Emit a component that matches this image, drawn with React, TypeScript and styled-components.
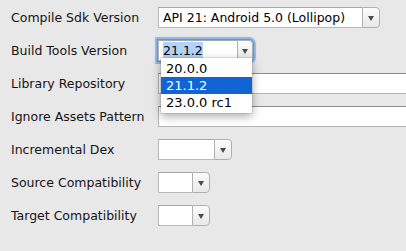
import styled, { createGlobalStyle } from 'styled-components'

const GlobalStyle = createGlobalStyle`
  html, body {
    margin: 0;
    background: #e8e8e8;
    overflow: hidden;
  }
  body {
    font-family: "DejaVu Sans", "Liberation Sans", sans-serif;
    color: #141414;
  }
`

const Form = styled.div`
  display: grid;
  grid-template-columns: 147px 1fr;
  grid-auto-rows: 21px;
  row-gap: 12px;
  align-items: center;
  padding: 7px 0 0 11px;
`

const Label = styled.span`
  font-size: 12.5px;
  line-height: 21px;
  white-space: nowrap;
`

const Combo = styled.div<{ $width: number; $focused?: boolean }>`
  position: relative;
  display: flex;
  width: ${(p) => p.$width}px;
  height: 21px;
  box-sizing: border-box;
  border-radius: 0 4px 4px 0;
  box-shadow: ${(p) =>
    p.$focused ? '0 0 0 1px #5f97db, 0 0 1px 3px #8ab5e8' : 'none'};
`

const ComboField = styled.div`
  flex: 1;
  min-width: 0;
  background: #fff;
  border: 1px solid #b8b8b8;
  border-top-color: #a6a6a6;
  border-right: none;
  box-sizing: border-box;
  padding-left: 4px;
  font-size: 12.5px;
  line-height: 19px;
  color: #000;
  white-space: nowrap;
  overflow: hidden;
`

const Selected = styled.span`
  background: #b4d3fa;
  padding: 1px 0;
`

const ComboArrow = styled.div<{ $narrow?: boolean }>`
  width: ${(p) => (p.$narrow ? 16 : 18)}px;
  flex: none;
  box-sizing: border-box;
  border: 1px solid #b0b0b0;
  border-radius: 0 4px 4px 0;
  background: linear-gradient(#fbfbfb, #e9e9e9);
  display: flex;
  align-items: center;
  justify-content: center;

  &::after {
    content: '';
    border-left: 3.5px solid transparent;
    border-right: 3.5px solid transparent;
    border-top: 5px solid #4a4a4a;
    margin-top: 1px;
  }
`

const TextField = styled.div`
  height: 21px;
  width: calc(100% + 12px);
  box-sizing: border-box;
  background: #fff;
  border: 1px solid #b4b4b4;
  border-top-color: #8c8c8c;
`

const Popup = styled.ul`
  position: absolute;
  z-index: 2;
  top: 18px;
  left: 3px;
  width: 91px;
  margin: 0;
  padding: 2px 0;
  list-style: none;
  background: #fff;
  box-shadow: 0 3px 9px rgba(0, 0, 0, 0.35), 0 0 0 1px rgba(0, 0, 0, 0.08);
`

const Option = styled.li<{ $active?: boolean }>`
  height: 17px;
  line-height: 17px;
  padding-left: 5px;
  font-size: 13px;
  color: ${(p) => (p.$active ? '#fff' : '#000')};
  background: ${(p) => (p.$active ? '#1164d3' : 'transparent')};
  white-space: nowrap;
`

const buildTools = ['20.0.0', '21.1.2', '23.0.0 rc1']

export default function App() {
  return (
    <>
      <GlobalStyle />
      <Form>
        <Label>Compile Sdk Version</Label>
        <Combo $width={222}>
          <ComboField>API 21: Android 5.0 (Lollipop)</ComboField>
          <ComboArrow />
        </Combo>

        <Label>Build Tools Version</Label>
        <Combo $width={95} $focused>
          <ComboField>
            <Selected>21.1.2</Selected>
          </ComboField>
          <ComboArrow $narrow />
          <Popup>
            {buildTools.map((v) => (
              <Option key={v} $active={v === '21.1.2'}>
                {v}
              </Option>
            ))}
          </Popup>
        </Combo>

        <Label>Library Repository</Label>
        <TextField />

        <Label>Ignore Assets Pattern</Label>
        <TextField />

        <Label>Incremental Dex</Label>
        <Combo $width={74}>
          <ComboField />
          <ComboArrow />
        </Combo>

        <Label>Source Compatibility</Label>
        <Combo $width={52}>
          <ComboField />
          <ComboArrow />
        </Combo>

        <Label>Target Compatibility</Label>
        <Combo $width={52}>
          <ComboField />
          <ComboArrow />
        </Combo>
      </Form>
    </>
  )
}
